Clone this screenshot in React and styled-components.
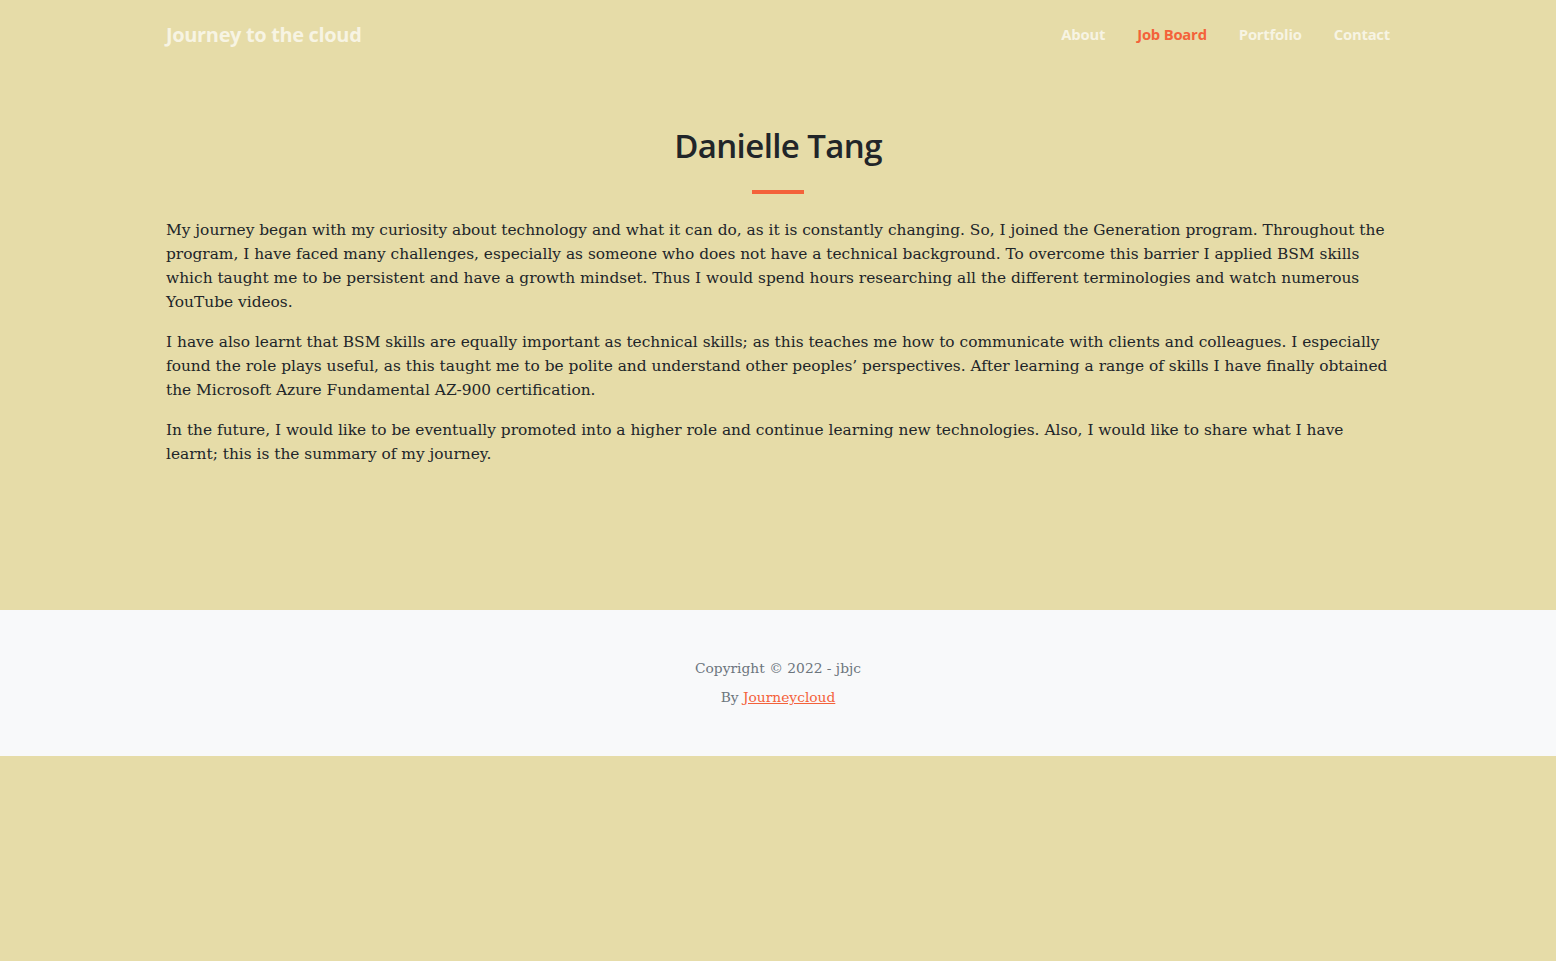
import React from "react";
import styled, { createGlobalStyle } from "styled-components";

const GlobalStyle = createGlobalStyle`
  html, body {
    margin: 0;
    padding: 0;
    background-color: #e6dca8;
  }
  * {
    box-sizing: border-box;
  }
`;

const Page = styled.div`
  min-height: 961px;
  background-color: #e6dca8;
`;

const Container = styled.div`
  width: 1224px;
  margin: 0 auto;
`;

const Nav = styled.nav`
  display: flex;
  align-items: center;
  justify-content: space-between;
  height: 68px;
`;

const Brand = styled.a`
  font-family: "Open Sans", sans-serif;
  font-weight: 700;
  font-size: 20px;
  letter-spacing: -0.35px;
  color: rgba(255, 255, 255, 0.7);
  text-decoration: none;
`;

const NavList = styled.ul`
  display: flex;
  gap: 32px;
  list-style: none;
  margin: 0;
  padding: 0;
`;

const NavLink = styled.a`
  font-family: "Open Sans", sans-serif;
  font-weight: 700;
  font-size: 14.8px;
  letter-spacing: -0.2px;
  color: ${(p) => (p.$active ? "#f4623a" : "rgba(255, 255, 255, 0.7)")};
  text-decoration: none;
`;

const Main = styled.main`
  padding: 54px 0 128px;
`;

const Title = styled.h1`
  font-family: "Open Sans", sans-serif;
  font-weight: 600;
  font-size: 33px;
  letter-spacing: -0.6px;
  color: #212529;
  text-align: center;
  margin: 0;
  line-height: 48px;
`;

const Divider = styled.hr`
  width: 52px;
  height: 4px;
  border: 0;
  background-color: #f4623a;
  margin: 20px auto 24px;
  opacity: 1;
`;

const Text = styled.p`
  font-family: "DejaVu Serif", serif;
  font-size: 15.4px;
  line-height: 24px;
  color: #212529;
  margin: 0 0 16px;
`;

const Footer = styled.footer`
  background-color: #f8f9fa;
  height: 146px;
  padding-top: 44px;
  text-align: center;
  font-family: "DejaVu Serif", serif;
  font-size: 13.8px;
  color: #6c757d;
`;

const FooterLine = styled.div`
  line-height: 29px;
`;

const FooterLink = styled.a`
  color: #f4623a;
  text-decoration: underline;
`;

const App = () => {
  return (
    <Page>
      <GlobalStyle />
      <Container>
        <Nav>
          <Brand href="#">Journey to the cloud</Brand>
          <NavList>
            <li>
              <NavLink href="#">About</NavLink>
            </li>
            <li>
              <NavLink href="#" $active>
                Job Board
              </NavLink>
            </li>
            <li>
              <NavLink href="#">Portfolio</NavLink>
            </li>
            <li>
              <NavLink href="#">Contact</NavLink>
            </li>
          </NavList>
        </Nav>
      </Container>
      <Main>
        <Container>
          <Title>Danielle Tang</Title>
          <Divider />
          <Text>
            My journey began with my curiosity about technology and what it can
            do, as it is constantly changing. So, I joined the Generation
            program. Throughout the program, I have faced many challenges,
            especially as someone who does not have a technical background. To
            overcome this barrier I applied BSM skills which taught me to be
            persistent and have a growth mindset. Thus I would spend hours
            researching all the different terminologies and watch numerous
            YouTube videos.
          </Text>
          <Text>
            I have also learnt that BSM skills are equally important as
            technical skills; as this teaches me how to communicate with clients
            and colleagues. I especially found the role plays useful, as this
            taught me to be polite and understand other peoples’ perspectives.
            After learning a range of skills I have finally obtained the
            Microsoft Azure Fundamental AZ-900 certification.
          </Text>
          <Text>
            In the future, I would like to be eventually promoted into a higher
            role and continue learning new technologies. Also, I would like to
            share what I have learnt; this is the summary of my journey.
          </Text>
        </Container>
      </Main>
      <Footer>
        <FooterLine>Copyright © 2022 - jbjc</FooterLine>
        <FooterLine>
          By <FooterLink href="#">Journeycloud</FooterLink>
        </FooterLine>
      </Footer>
    </Page>
  );
};

export default App;
